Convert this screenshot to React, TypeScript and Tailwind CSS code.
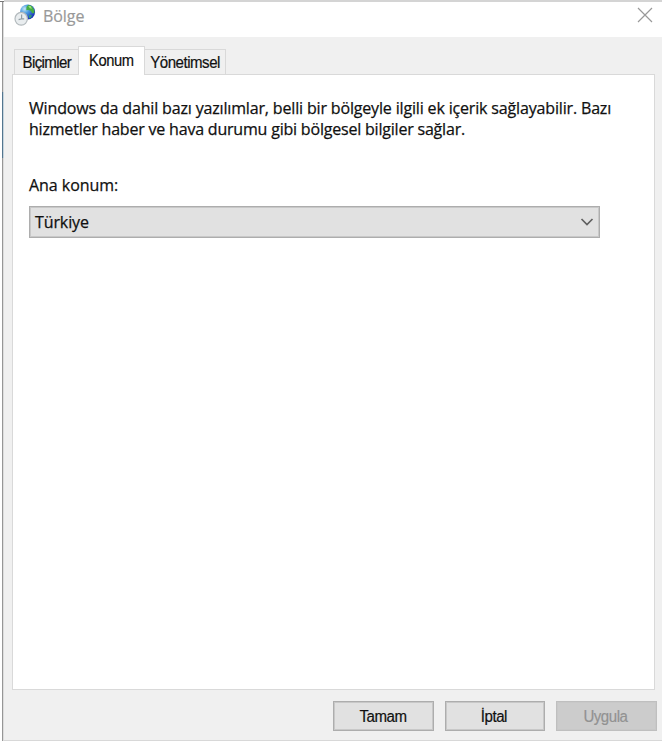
import React from "react";

function RegionIcon() {
  return (
    <svg width="22" height="24" viewBox="0 0 22 24" className="block">
      <defs>
        <radialGradient id="globe" cx="0.3" cy="0.3" r="0.75">
          <stop offset="0" stopColor="#c5e8f8" />
          <stop offset="0.4" stopColor="#4a9be0" />
          <stop offset="1" stopColor="#1a35b5" />
        </radialGradient>
      </defs>
      <circle cx="13.6" cy="8.9" r="7.5" fill="url(#globe)" />
      <path d="M12.5 3.7 14.5 1.7l3.3 1.3 2.3 3.5.4 3.2-2 .8-2-2.8-2.2-.6-2 .2z" fill="#45ad45" />
      <path d="m14.3 2.9 2.3.2 1.3 2.7-2.2-.6z" fill="#9be274" />
      <path d="m15 12 3 .2-1.2 2.6-1.8.4z" fill="#2f9d72" />
      <ellipse cx="7.2" cy="15.8" rx="6.2" ry="6.4" fill="#e9edef" stroke="#b3babd" strokeWidth="1.2" />
      <path d="M7.6 11.5v4.4l-3 .8M7.6 15.9h2.6" fill="none" stroke="#929ea4" strokeWidth="1.2" />
    </svg>
  );
}

function DialogButton({ label, width, disabled = false }: { label: string; width: string; disabled?: boolean }) {
  return (
    <button
      disabled={disabled}
      className={`${width} h-[30px] border pr-[2px] pt-px font-['Liberation_Sans',sans-serif] text-[16px] leading-[28px] shadow-[inset_0_0_0_1px_#c8c8c8] [-webkit-text-stroke:0.2px] ${
        disabled ? "border-[#bfbfbf] bg-[#cccccc] text-[#929292]" : "border-[#adadad] bg-[#e1e1e1] text-[#101010]"
      }`}
    >
      <span className="inline-block scale-x-94 tracking-[-0.5px]">{label}</span>
    </button>
  );
}

export default function App() {
  return (
    <div className="flex h-[741px] w-[662px] overflow-hidden bg-white font-['Open_Sans','Noto_Sans',sans-serif] text-[#101010]">
      <div className="flex w-1 shrink-0 flex-col">
        <div className="h-[2px] w-2 border-b border-[#777777]" />
        <div className="ml-[2px] h-[90px] border-l border-[#969696] bg-[#dddddd]" />
        <div className="ml-[2px] h-[66px] border-l border-[#53758e] bg-[#c6d4dd]" />
        <div className="ml-[2px] flex-1 border-l border-[#969696] bg-[#dddddd]" />
      </div>
      <div className="flex min-w-0 flex-1 flex-col border-b border-[#d8d8d8] bg-[#f0f0f0]">
        <header className="flex h-[37px] shrink-0 border-t-2 border-[#d4d4d4] bg-white pl-[10px]">
          <div className="pt-[1px]"><RegionIcon /></div>
          <h1 className="ml-[7px] pt-[2px] text-[16px] leading-6 tracking-[-0.05px] text-[#999999] [-webkit-text-stroke:0.2px]">Bölge</h1>
          <button aria-label="Kapat" className="ml-auto mr-[8px] mt-[4px] h-[18px] w-[18px]">
            <svg width="18" height="18" viewBox="0 0 18 18"><path d="m2 2 14 14M16 2 2 16" stroke="#999999" strokeWidth="1.2" /></svg>
          </button>
        </header>
        <nav className="flex h-[37px] shrink-0 items-end pl-[10px] font-['Liberation_Sans',sans-serif] text-[16px] [-webkit-text-stroke:0.2px]">
          <button className="h-[25px] w-[64px] border-l border-t border-[#d9d9d9] pt-px leading-6">
            <span className="inline-block scale-x-94 tracking-[-0.65px]">Biçimler</span>
          </button>
          <button className="relative z-10 -mb-[1px] h-[29px] w-[67px] border-x border-t border-[#d9d9d9] bg-white pb-px leading-6">
            <span className="inline-block scale-x-92 tracking-[-0.4px]">Konum</span>
          </button>
          <button className="h-[25px] w-[81px] border-r border-t border-[#d9d9d9] pt-px leading-6">
            <span className="inline-block scale-x-94 tracking-[-0.5px]">Yönetimsel</span>
          </button>
        </nav>
        <main className="ml-2 h-[616px] w-[643px] shrink-0 border border-[#d9d9d9] bg-white pl-[17px] pt-[23px] [-webkit-text-stroke:0.25px]">
          <p className="-ml-px whitespace-nowrap text-[16px] leading-[21px]">
            <span className="tracking-[-0.16px]">Windows da dahil bazı yazılımlar, belli bir bölgeyle ilgili ek içerik sağlayabilir. Bazı</span>
            <br />
            <span className="tracking-[-0.2px]">hizmetler haber ve hava durumu gibi bölgesel bilgiler sağlar.</span>
          </p>
          <p className="-ml-px mt-[35px] text-[16px] leading-[21px] tracking-[-0.05px]">Ana konum:</p>
          <button className="-ml-px mt-[10px] flex h-8 w-[571px] items-center justify-between border border-[#adadad] bg-[#e1e1e1] pl-[5px] pr-[5px] text-[16px] leading-7 shadow-[inset_0_0_0_1px_#c8c8c8]">
            <span className="tracking-[-0.1px]">Türkiye</span>
            <svg width="14" height="10" viewBox="0 0 14 10"><path d="m1.5 2 5.5 5.5L12.5 2" fill="none" stroke="#606060" strokeWidth="1.7" /></svg>
          </button>
        </main>
        <footer className="flex flex-1 items-start gap-[11px] pl-[329px] pt-[11px]">
          <DialogButton label="Tamam" width="w-[101px]" />
          <DialogButton label="İptal" width="w-[100px]" />
          <DialogButton label="Uygula" width="w-[101px]" disabled />
        </footer>
      </div>
    </div>
  );
}
